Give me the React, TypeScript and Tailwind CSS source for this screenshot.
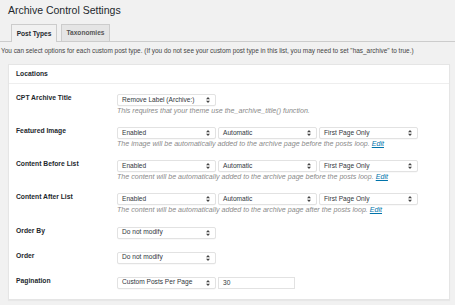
import React from 'react';

function Arrows() {
  return (
    <svg width="4" height="6" viewBox="0 0 4 6" className="shrink-0">
      <path d="M2 0 L4 2.3 L0 2.3 Z" fill="#444" />
      <path d="M2 6 L4 3.7 L0 3.7 Z" fill="#444" />
    </svg>
  );
}

function Select({ value, width = 'w-[99px]' }: { value: string; width?: string }) {
  return (
    <div
      className={`${width} h-[12px] flex items-center justify-between pl-[4px] pr-[5px] bg-white border border-[#e2e2e2] rounded-[2px] shadow-[0_0.5px_0.5px_rgba(0,0,0,0.05)] text-[6.6px] text-[#32373c]`}
    >
      <span className="leading-none">{value}</span>
      <Arrows />
    </div>
  );
}

interface RowProps {
  label: string;
  children: React.ReactNode;
  help?: React.ReactNode;
}

function Row({ label, children, help }: RowProps) {
  return (
    <div className={`flex ${help ? 'py-[6px]' : 'py-[6.5px]'}`}>
      <div className="w-[101px] shrink-0 -mt-[1px] text-[6.75px] leading-[9px] font-bold text-[#23282d]">{label}</div>
      <div>
        <div className="flex gap-[2px]">{children}</div>
        {help && (
          <p className="mt-[1px] text-[7.1px] leading-[8px] italic text-[#8a8a8a]">{help}</p>
        )}
      </div>
    </div>
  );
}

function Edit() {
  return <span className="text-[#0073aa] underline">Edit</span>;
}

export default function App() {
  return (
    <div
      className="w-[455px] h-[305px] bg-[#f1f1f1] overflow-hidden"
      style={{ fontFamily: '"Liberation Sans", Arial, sans-serif' }}
    >
      <h1 className="pl-[8px] pt-[4px] text-[10.5px] leading-[13px] font-normal text-[#23282d]">
        Archive Control Settings
      </h1>

      <div className="mt-[7px] flex items-end gap-[4px] pl-[11px] border-b border-[#ccc]">
        <div className="w-[46px] h-[18px] -mb-px flex items-center justify-center bg-[#f1f1f1] border border-b-0 border-[#ccc] text-[6.6px] font-bold text-[#23282d]">
          Post Types
        </div>
        <div className="w-[49px] h-[17px] flex items-center justify-center bg-[#e5e5e5] border border-b-0 border-[#ccc] text-[6.6px] font-bold text-[#555]">
          Taxonomies
        </div>
      </div>

      <p className="pl-[1px] mt-[4px] text-[6.45px] leading-[9px] text-[#444]">
        You can select options for each custom post type. (If you do not see your custom post type in this list, you may need to set "has_archive" to true.)
      </p>

      <div className="ml-[8px] mt-[9px] w-[442px] bg-white border border-[#e5e5e5] shadow-[0_1px_1px_rgba(0,0,0,0.04)]">
        <div className="h-[19px] flex items-center px-[7px] border-b border-[#eee] text-[6.75px] font-bold text-[#23282d]">
          Locations
        </div>
        <div className="px-[7px] pt-[4px] pb-[4px]">
          <Row label="CPT Archive Title" help="This requires that your theme use the_archive_title() function.">
            <Select value="Remove Label (Archive:)" />
          </Row>
          <Row
            label="Featured Image"
            help={<>The image will be automatically added to the archive page before the posts loop. <Edit /></>}
          >
            <Select value="Enabled" />
            <Select value="Automatic" />
            <Select value="First Page Only" />
          </Row>
          <Row
            label="Content Before List"
            help={<>The content will be automatically added to the archive page before the posts loop. <Edit /></>}
          >
            <Select value="Enabled" />
            <Select value="Automatic" />
            <Select value="First Page Only" />
          </Row>
          <Row
            label="Content After List"
            help={<>The content will be automatically added to the archive page after the posts loop. <Edit /></>}
          >
            <Select value="Enabled" />
            <Select value="Automatic" />
            <Select value="First Page Only" />
          </Row>
          <Row label="Order By">
            <Select value="Do not modify" />
          </Row>
          <Row label="Order">
            <Select value="Do not modify" />
          </Row>
          <Row label="Pagination">
            <Select value="Custom Posts Per Page" />
            <div className="w-[77px] h-[12px] flex items-center px-[4px] bg-white border border-[#e2e2e2] text-[6.6px] text-[#32373c]">
              30
            </div>
          </Row>
        </div>
      </div>
    </div>
  );
}
